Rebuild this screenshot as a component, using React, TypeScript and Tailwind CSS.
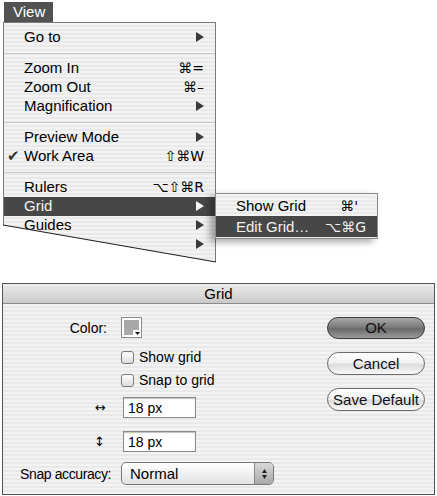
import React from 'react';

const stripes =
  'bg-[repeating-linear-gradient(180deg,#f3f3f3_0px,#f3f3f3_2px,#e9e9e9_2px,#e9e9e9_4px)]';

type Item =
  | { kind: 'sep' }
  | { kind: 'item'; label: string; shortcut?: string; arrow?: boolean; check?: boolean; active?: boolean };

const MENU: Item[] = [
  { kind: 'item', label: 'Go to', arrow: true },
  { kind: 'sep' },
  { kind: 'item', label: 'Zoom In', shortcut: '⌘=' },
  { kind: 'item', label: 'Zoom Out', shortcut: '⌘–' },
  { kind: 'item', label: 'Magnification', arrow: true },
  { kind: 'sep' },
  { kind: 'item', label: 'Preview Mode', arrow: true },
  { kind: 'item', label: 'Work Area', shortcut: '⇧⌘W', check: true },
  { kind: 'sep' },
  { kind: 'item', label: 'Rulers', shortcut: '⌥⇧⌘R' },
  { kind: 'item', label: 'Grid', arrow: true, active: true },
  { kind: 'item', label: 'Guides', arrow: true },
  { kind: 'item', label: '', arrow: true },
];

const Arrow = ({ light }: { light?: boolean }) => (
  <svg width="8" height="10" viewBox="0 0 8 10" className="shrink-0">
    <path d="M0 0 L8 5 L0 10 Z" fill={light ? '#f4f4f4' : '#3a3a3a'} />
  </svg>
);

const MenuRow = ({ item }: { item: Item }) => {
  if (item.kind === 'sep') {
    return (
      <div className="h-[12px] flex items-center">
        <div className="w-full h-px bg-[#c8c8c8]" />
      </div>
    );
  }
  return (
    <div
      className={`relative h-[19px] flex items-center pl-[20px] pr-[11px] pb-[1px] ${
        item.active ? 'bg-[#474747] text-[#f2f2f2]' : 'text-black'
      }`}
    >
      {item.check && <span className="absolute left-[3px] text-[15px] text-[#333]">✔</span>}
      <span className="flex-1">{item.label}</span>
      {item.shortcut && <span className="font-['DejaVu_Sans',sans-serif] text-[14px]">{item.shortcut}</span>}
      {item.arrow && <Arrow light={item.active} />}
    </div>
  );
};

const GelButton = ({ label, primary }: { label: string; primary?: boolean }) => (
  <div
    className={`w-[98px] rounded-full border flex items-center justify-center text-[15px] ${
      primary
        ? 'h-[22px] border-[#3c3c3c] bg-[linear-gradient(180deg,#a8a8a8_0%,#7c7c7c_45%,#6a6a6a_55%,#9c9c9c_100%)] text-[#111]'
        : 'h-[23px] border-[#6a6a6a] bg-[linear-gradient(180deg,#ffffff_0%,#f2f2f2_45%,#dcdcdc_55%,#f8f8f8_100%)] text-[#111]'
    }`}
  >
    {label}
  </div>
);

const Checkbox = ({ label }: { label: string }) => (
  <div className="flex items-center gap-[5px]">
    <div className="w-[13px] h-[13px] rounded-[3px] border border-[#7a7a7a] bg-[linear-gradient(180deg,#ffffff,#dcdcdc)]" />
    <span>{label}</span>
  </div>
);

const TextBox = ({ value }: { value: string }) => (
  <div className="ml-[2px] w-[73px] h-[21px] border border-[#8a8a8a] bg-white shadow-[inset_0_1px_1px_rgba(0,0,0,0.25)] flex items-center pl-[4px]">
    {value}
  </div>
);

const FormRow = ({
  label,
  labelClass = '',
  className,
  children,
}: {
  label?: string;
  labelClass?: string;
  className: string;
  children: React.ReactNode;
}) => (
  <div className={`flex items-center ${className}`}>
    <div className={`w-[110px] shrink-0 text-right ${labelClass}`}>{label}</div>
    <div className="ml-[8px]">{children}</div>
  </div>
);

export default function App() {
  return (
    <div className="w-[437px] h-[496px] bg-white font-['Liberation_Sans',Arial,sans-serif] text-[14px] leading-[18px] text-black pt-[2px] overflow-hidden">
      <div className="ml-[4px] w-[49px] h-[20px] bg-[#525252] text-white text-[15px] flex items-center pl-[9px]">View</div>

      <div className="relative ml-[3px] w-[213px] h-[245px] text-[15px]">
        <div
          className={`absolute inset-0 border border-[#7a7a7a] pt-[5px] ${stripes} [clip-path:polygon(0_0,100%_0,100%_240px,0_203px)]`}
        >
          {MENU.map((item, i) => (
            <MenuRow key={i} item={item} />
          ))}
        </div>
        <svg className="absolute left-0 top-0" width="213" height="245">
          <line x1="0" y1="203" x2="213" y2="240" stroke="#1e1e1e" strokeWidth="1.2" />
        </svg>

        <div
          className={`absolute left-[212px] top-[171px] w-[163px] h-[46px] border border-[#8a8a8a] ${stripes} shadow-[-5px_3px_7px_rgba(0,0,0,0.35)] pt-[1px]`}
        >
          <div className="h-[21px] flex items-center pl-[20px] pr-[19px]">
            <span className="flex-1">Show Grid</span>
            <span className="font-['DejaVu_Sans',sans-serif] text-[14px]">⌘'</span>
          </div>
          <div className="h-[21px] flex items-center pl-[20px] pr-[11px] bg-[#474747] text-[#f2f2f2]">
            <span className="flex-1">Edit Grid…</span>
            <span className="font-['DejaVu_Sans',sans-serif] text-[14px]">⌥⌘G</span>
          </div>
        </div>
      </div>

      <div className="mt-[16px] ml-[2px] w-[433px] h-[212px] border border-[#555] flex flex-col">
        <div className="h-[20px] shrink-0 border-b border-[#8c8c8c] bg-[linear-gradient(180deg,#ececec,#c9c9c9)] flex items-center justify-center text-[15px]">
          Grid
        </div>
        <div className={`flex-1 flex justify-between ${stripes}`}>
          <div className="pt-[13px] flex flex-col">
            <FormRow label="Color:" labelClass="pr-[6px]" className="h-[21px]">
              <div className="relative w-[21px] h-[21px] border border-[#8a8a8a] bg-white p-[2px]">
                <div className="w-full h-full bg-[#a9a9a9]" />
                <div className="absolute right-0 bottom-0 w-[8px] h-[7px] bg-white flex items-center justify-center">
                  <svg width="5" height="3" viewBox="0 0 5 3">
                    <path d="M0 0 L5 0 L2.5 3 Z" fill="#111" />
                  </svg>
                </div>
              </div>
            </FormRow>

            <FormRow className="h-[16px] mt-[11px]">
              <Checkbox label="Show grid" />
            </FormRow>

            <FormRow className="h-[16px] mt-[7px]">
              <Checkbox label="Snap to grid" />
            </FormRow>

            <FormRow
              label="↔"
              labelClass="pr-[7px] font-['DejaVu_Sans',sans-serif] text-[13px]"
              className="h-[21px] mt-[9px]"
            >
              <TextBox value="18 px" />
            </FormRow>

            <FormRow
              label="↕"
              labelClass="pr-[8px] font-['DejaVu_Sans',sans-serif] text-[13px]"
              className="h-[21px] mt-[13px]"
            >
              <TextBox value="18 px" />
            </FormRow>

            <FormRow label="Snap accuracy:" labelClass="tracking-[-0.4px] pr-[2px]" className="h-[23px] mt-[10px]">
              <div className="w-[153px] h-[23px] rounded-[5px] border border-[#777] bg-[linear-gradient(180deg,#ffffff,#e2e2e2)] flex overflow-hidden">
                <div className="flex-1 flex items-center pl-[8px] text-[15px]">Normal</div>
                <div className="w-[19px] border-l border-[#8a8a8a] bg-[linear-gradient(180deg,#d8d8d8,#a8a8a8)] flex flex-col items-center justify-center gap-[2px]">
                  <svg width="5" height="4" viewBox="0 0 5 4">
                    <path d="M2.5 0 L5 4 L0 4 Z" fill="#222" />
                  </svg>
                  <svg width="5" height="4" viewBox="0 0 5 4">
                    <path d="M0 0 L5 0 L2.5 4 Z" fill="#222" />
                  </svg>
                </div>
              </div>
            </FormRow>
          </div>

          <div className="pt-[13px] pr-[9px] flex flex-col gap-[13px]">
            <GelButton label="OK" primary />
            <GelButton label="Cancel" />
            <GelButton label="Save Default" />
          </div>
        </div>
      </div>
    </div>
  );
}
